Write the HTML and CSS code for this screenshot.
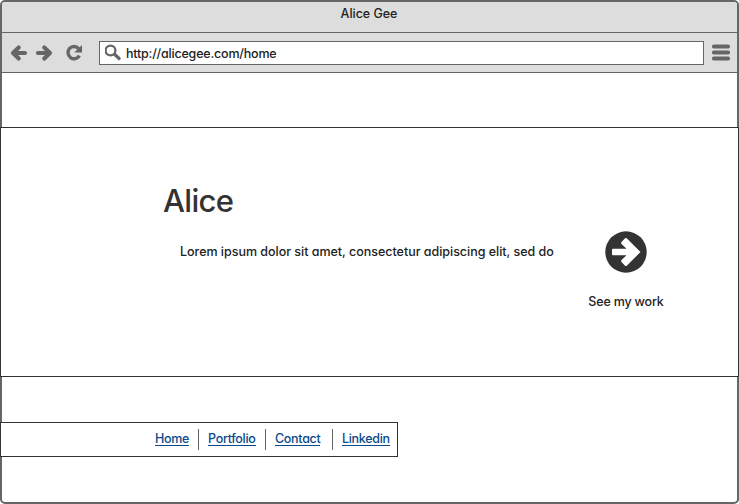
FILE: index.html
```html
<!DOCTYPE html>
<html lang="en">
<head>
<meta charset="utf-8">
<title>Alice Gee</title>
<link rel="stylesheet" href="styles.css">
</head>
<body>
<div class="browser">
  <header class="titlebar"><span class="window-title">Alice Gee</span></header>
  <div class="toolbar">
    <svg class="controls" width="46" height="20" viewBox="0 0 46 20" fill="none" stroke="#666" stroke-width="4.200" stroke-linecap="round" stroke-linejoin="round">
      <path d="M16 10H5M9.700 4.500L4 10l5.700 5.500"/>
      <path d="M29 10h11M35.300 4.500L41 10l-5.700 5.500"/>
    </svg>
    <svg class="reload" width="18" height="18" viewBox="0 0 18 18">
      <path d="M13.700 4.600A6.100 6.100 0 1 0 14.400 11.600" fill="none" stroke="#666" stroke-width="3.400"/>
      <path d="M17 1v7.500H9.200z" fill="#666"/>
    </svg>
    <div class="address">
      <svg width="18" height="18" viewBox="0 0 18 18" fill="none" stroke="#666">
        <circle cx="5.500" cy="6.500" r="4.900" stroke-width="2.300"/>
        <path d="M9.800 10.500l4.300 4" stroke-width="3.300" stroke-linecap="round"/>
      </svg>
      <span class="url">http://alicegee.com/home</span>
    </div>
    <svg class="menu" width="18" height="17" viewBox="0 0 18 17" fill="#666">
      <rect y=".5" width="18" height="4" rx="1.800"/>
      <rect y="6.500" width="18" height="4" rx="1.800"/>
      <rect y="12.500" width="18" height="4" rx="1.800"/>
    </svg>
  </div>
  <main class="page">
    <section class="hero">
      <div class="intro">
        <h1>Alice</h1>
        <p>Lorem ipsum dolor sit amet, consectetur adipiscing elit, sed do</p>
      </div>
      <div class="work">
        <svg width="42" height="42" viewBox="0 0 42 42">
          <circle cx="21" cy="21" r="20.700" fill="#333"/>
          <path d="M8 17.800H21.500L16.500 13Q15.800 12 16.500 11L19.800 7.500Q21 6.500 22 7.500L35.500 21 22 34.500Q21 35.500 19.800 34.500L16.500 31Q15.800 30 16.500 29L21.500 24.200H8Q7 24.200 7 23.200V18.800Q7 17.800 8 17.800z" fill="#fff"/>
        </svg>
        <span>See my work</span>
      </div>
    </section>
    <nav class="links">
      <div class="item"><a>Home</a></div>
      <div class="item"><a>Portfolio</a></div>
      <div class="item"><a>Contact</a></div>
      <div class="item"><a>Linkedin</a></div>
    </nav>
  </main>
</div>
</body>
</html>
```
FILE: styles.css
```css
* { box-sizing: border-box; }
body {
  margin: 0;
  background: #fff;
  color: #222;
  font: 450 12.5px/16px Inter, "Open Sans", sans-serif;
  font-feature-settings: "cv11";
  letter-spacing: -0.02px;
  white-space: nowrap;
}
.browser {
  width: 739px;
  height: 504px;
  border: 2px solid #666;
  border-radius: 5px;
}
.titlebar {
  height: 31px;
  padding: 4px 1px 0 0;
  background: #ddd;
  border-bottom: 1px solid #666;
  border-radius: 3px 3px 0 0;
  text-align: center;
}
.toolbar {
  display: flex;
  align-items: center;
  height: 40px;
  padding-left: 7px;
  background: #ddd;
  border-bottom: 1px solid #666;
}
.reload { margin-left: 10px; }
.address {
  display: flex;
  align-items: center;
  width: 605px;
  height: 24px;
  margin-left: 16px;
  padding-left: 5px;
  border: 1px solid #666;
  background: #fff;
}
.url {
  margin: 2px 0 0 3px;
  letter-spacing: -0.2px;
}
.menu { margin-left: 8px; }
.page { padding-top: 54px; }
.hero {
  display: flex;
  width: 739px;
  height: 250px;
  margin-left: -2px;
  border: 1px solid #333;
  background: #fff;
}
.intro { width: 424px; padding: 53px 0 0 162px; }
h1 {
  margin: 0;
  font-size: 31px;
  line-height: 40px;
  font-weight: 450;
  letter-spacing: -0.7px;
  color: #333;
}
p { margin: 23px 0 0 17px; }
.work {
  display: flex;
  flex-direction: column;
  align-items: center;
  width: 76px;
  margin-left: 163px;
  padding-top: 103px;
}
.work span {
  margin-top: 21px;
  letter-spacing: -0.18px;
}
.links {
  display: flex;
  align-items: center;
  width: 398px;
  height: 35px;
  margin: 45px 0 0 -2px;
  padding-left: 144px;
  border: 1px solid #333;
  background: #fff;
}
.item {
  display: flex;
  flex: none;
  width: 67px;
  height: 21px;
  padding: 1px 0 0 9px;
}
.item:first-child { width: 53px; padding-left: 10px; }
.item + .item { border-left: 1px solid #666; }
.links a {
  height: 16px;
  line-height: 17px;
  color: #084a8c;
  letter-spacing: -0.3px;
  border-bottom: 1px solid #084a8c;
}
```
